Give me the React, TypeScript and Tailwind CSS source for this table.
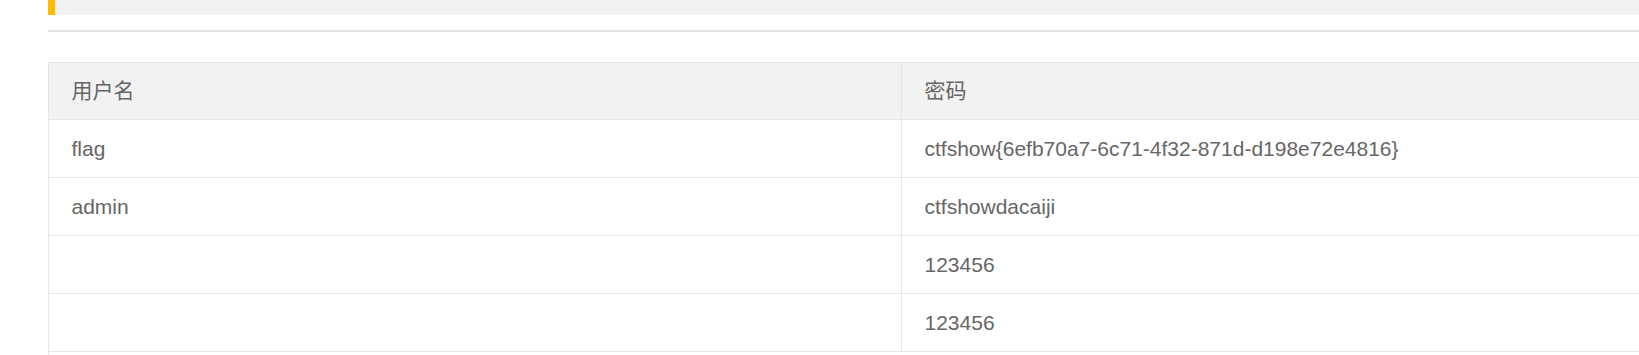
const rows: [string, string][] = [
  ["flag", "ctfshow{6efb70a7-6c71-4f32-871d-d198e72e4816}"],
  ["admin", "ctfshowdacaiji"],
  ["", "123456"],
  ["", "123456"],
];

function Cell({ children, head }: { children?: React.ReactNode; head?: boolean }) {
  return (
    <div
      className={`flex items-center border-r border-b border-[#e6e6e6] px-[22.5px] leading-[30px] ${
        head ? "h-[57px] bg-[#f2f2f2]" : "h-[58px] bg-white"
      }`}
    >
      {children}
    </div>
  );
}

export default function App() {
  return (
    <div className="w-[1639px] h-[355px] overflow-hidden bg-white font-['Liberation_Sans','Noto_Sans_CJK_SC',sans-serif] text-[21px] text-[#666]">
      <div className="ml-[48px] w-[1700px]">
        {/* quote block */}
        <div className="h-[15px] bg-[#f2f2f2] border-l-[7px] border-[#FFB800]" />
        <div className="mt-[15px] h-[2px] bg-[#e2e2e2]" />

        {/* ───────────────────────────────────────────── */}
        <div className="mt-[30px] border-l border-t border-[#e6e6e6] pb-[20px]">
          <div className="grid grid-cols-[853px_1fr]">
            <Cell head>用户名</Cell>
            <Cell head>密码</Cell>
            {rows.map(([name, pass], i) => (
              <div key={i} className="contents">
                <Cell>{name}</Cell>
                <Cell>{pass}</Cell>
              </div>
            ))}
          </div>
        </div>
      </div>
    </div>
  );
}
